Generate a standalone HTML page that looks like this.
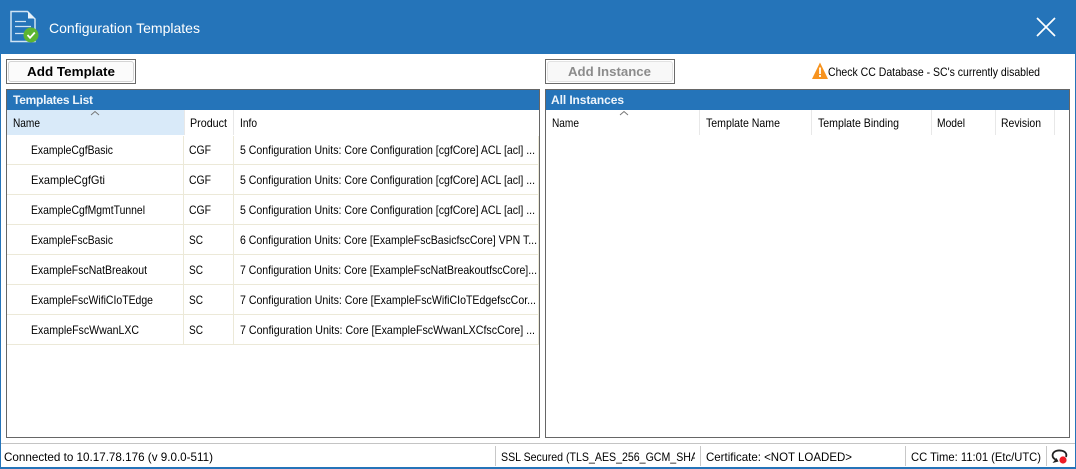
<!DOCTYPE html>
<html><head><meta charset="utf-8"><title>Configuration Templates</title>
<style>
html,body{margin:0;padding:0;background:#fff;width:1076px;height:469px;overflow:hidden}
svg{display:block}
text{font-family:"Liberation Sans",sans-serif;font-size:12px;fill:#000}
.b{font-weight:bold}
.big{font-size:13px}
</style></head><body>
<svg width="1076" height="469" viewBox="0 0 1076 469" xmlns="http://www.w3.org/2000/svg">
<defs><clipPath id="ssl"><rect x="497" y="445" width="198" height="22"/></clipPath></defs>
<rect width="1076" height="469" fill="#fff"/>
<!-- window frame -->
<rect x="0" y="0" width="1076" height="54" fill="#2574b9"/>
<rect x="0" y="0" width="1" height="469" fill="#2574b9"/>
<rect x="1075" y="0" width="1" height="469" fill="#2574b9"/>
<rect x="0" y="467" width="1076" height="2" fill="#2574b9"/>
<!-- title icon -->
<path d="M11 11.500H27.500L35 19V41.500H11Z" fill="#2574b9" stroke="#cfe3f4" stroke-width="1.500"/>
<path d="M28 11.500V18.500H35Z" fill="#e8f2fa"/>
<path d="M15 21.500H26M15 26.500H31M15 33.500H24" stroke="#cfe3f4" stroke-width="1.300" fill="none"/>
<circle cx="31" cy="35" r="7.500" fill="#5cb531"/>
<path d="M27.500 35L30 37.800L34.800 32.500" stroke="#fff" stroke-width="1.800" fill="none"/>
<text x="49" y="33" style="font-size:14px;fill:#fff" textLength="151" lengthAdjust="spacingAndGlyphs">Configuration Templates</text>
<!-- close -->
<path d="M1037 18L1055 36M1055 18L1037 36" stroke="#fff" stroke-width="1.700" fill="none"/>
<!-- buttons -->
<rect x="6.500" y="59.500" width="129" height="24" fill="#fff" stroke="#6a6a6a"/>
<rect x="8.500" y="61.500" width="125" height="20" rx="2.500" fill="#fbfbfb" stroke="#d4d4d4"/>
<text x="27" y="76" class="b big" textLength="88" lengthAdjust="spacingAndGlyphs">Add Template</text>
<rect x="545.500" y="59.500" width="129" height="24" fill="#fff" stroke="#6a6a6a"/>
<rect x="547.500" y="61.500" width="125" height="20" rx="2.500" fill="#f8f8f8" stroke="#e2e2e2"/>
<text x="568" y="76" class="b big" style="fill:#8c8c8c" textLength="83" lengthAdjust="spacingAndGlyphs">Add Instance</text>
<!-- warning -->
<path d="M820 62.500L828 79H812Z" fill="#f7931e"/>
<rect x="819.100" y="67.500" width="1.800" height="6.500" fill="#fff"/>
<rect x="819.100" y="75" width="1.800" height="2" fill="#fff"/>
<text x="828" y="76" textLength="212" lengthAdjust="spacingAndGlyphs">Check CC Database - SC's currently disabled</text>
<!-- left panel -->
<rect x="6.500" y="89.500" width="533" height="348" fill="#fff" stroke="#666"/>
<rect x="7" y="90" width="532" height="20" fill="#2574b9"/>
<text x="13" y="104" class="b" style="fill:#eef5fb" textLength="80">Templates List</text>
<rect x="7" y="110" width="177" height="25" fill="#d9eaf9"/>
<path d="M91 115L95 111.500L99 115" fill="none" stroke="#777" stroke-width="1"/>
<rect x="184" y="110" width="1" height="25" fill="#e8e8e8"/>
<rect x="233" y="110" width="1" height="25" fill="#e8e8e8"/>
<text x="13" y="127" textLength="27" lengthAdjust="spacingAndGlyphs">Name</text>
<text x="190" y="127" textLength="37" lengthAdjust="spacingAndGlyphs">Product</text>
<text x="240" y="127" textLength="17" lengthAdjust="spacingAndGlyphs">Info</text>
<!-- row grid -->
<g fill="#ece9d8">
<rect x="7" y="164" width="532" height="1"/>
<rect x="7" y="194" width="532" height="1"/>
<rect x="7" y="224" width="532" height="1"/>
<rect x="7" y="254" width="532" height="1"/>
<rect x="7" y="284" width="532" height="1"/>
<rect x="7" y="314" width="532" height="1"/>
<rect x="7" y="344" width="532" height="1"/>
<rect x="183" y="136" width="1" height="208"/>
<rect x="233" y="136" width="1" height="208"/>
<rect x="538" y="136" width="1" height="208"/>
</g>
<text x="31" y="154" textLength="82" lengthAdjust="spacingAndGlyphs">ExampleCgfBasic</text>
<text x="189" y="154" textLength="22" lengthAdjust="spacingAndGlyphs">CGF</text>
<text x="240" y="154" textLength="295" lengthAdjust="spacingAndGlyphs">5 Configuration Units: Core Configuration [cgfCore] ACL [acl] ...</text>
<text x="31" y="184" textLength="74" lengthAdjust="spacingAndGlyphs">ExampleCgfGti</text>
<text x="189" y="184" textLength="22" lengthAdjust="spacingAndGlyphs">CGF</text>
<text x="240" y="184" textLength="295" lengthAdjust="spacingAndGlyphs">5 Configuration Units: Core Configuration [cgfCore] ACL [acl] ...</text>
<text x="31" y="214" textLength="114" lengthAdjust="spacingAndGlyphs">ExampleCgfMgmtTunnel</text>
<text x="189" y="214" textLength="22" lengthAdjust="spacingAndGlyphs">CGF</text>
<text x="240" y="214" textLength="295" lengthAdjust="spacingAndGlyphs">5 Configuration Units: Core Configuration [cgfCore] ACL [acl] ...</text>
<text x="31" y="244" textLength="82" lengthAdjust="spacingAndGlyphs">ExampleFscBasic</text>
<text x="189" y="244" textLength="14" lengthAdjust="spacingAndGlyphs">SC</text>
<text x="240" y="244" textLength="297" lengthAdjust="spacingAndGlyphs">6 Configuration Units: Core [ExampleFscBasicfscCore] VPN T...</text>
<text x="31" y="274" textLength="116" lengthAdjust="spacingAndGlyphs">ExampleFscNatBreakout</text>
<text x="189" y="274" textLength="14" lengthAdjust="spacingAndGlyphs">SC</text>
<text x="240" y="274" textLength="297" lengthAdjust="spacingAndGlyphs">7 Configuration Units: Core [ExampleFscNatBreakoutfscCore]...</text>
<text x="31" y="304" textLength="122" lengthAdjust="spacingAndGlyphs">ExampleFscWifiCIoTEdge</text>
<text x="189" y="304" textLength="14" lengthAdjust="spacingAndGlyphs">SC</text>
<text x="240" y="304" textLength="296" lengthAdjust="spacingAndGlyphs">7 Configuration Units: Core [ExampleFscWifiCIoTEdgefscCor...</text>
<text x="31" y="334" textLength="108" lengthAdjust="spacingAndGlyphs">ExampleFscWwanLXC</text>
<text x="189" y="334" textLength="14" lengthAdjust="spacingAndGlyphs">SC</text>
<text x="240" y="334" textLength="295" lengthAdjust="spacingAndGlyphs">7 Configuration Units: Core [ExampleFscWwanLXCfscCore] ...</text>
<!-- right panel -->
<rect x="545.500" y="89.500" width="524" height="348" fill="#fff" stroke="#666"/>
<rect x="546" y="90" width="523" height="20" fill="#2574b9"/>
<text x="551" y="104" class="b" style="fill:#eef5fb" textLength="73">All Instances</text>
<path d="M620 115L624 111.500L628 115" fill="none" stroke="#777" stroke-width="1"/>
<g fill="#e8e8e8">
<rect x="699" y="110" width="1" height="25"/>
<rect x="811" y="110" width="1" height="25"/>
<rect x="931" y="110" width="1" height="25"/>
<rect x="995" y="110" width="1" height="25"/>
<rect x="1054" y="110" width="1" height="25"/>
</g>
<text x="552" y="127" textLength="27" lengthAdjust="spacingAndGlyphs">Name</text>
<text x="706" y="127" textLength="74" lengthAdjust="spacingAndGlyphs">Template Name</text>
<text x="818" y="127" textLength="81" lengthAdjust="spacingAndGlyphs">Template Binding</text>
<text x="937" y="127" textLength="28" lengthAdjust="spacingAndGlyphs">Model</text>
<text x="1001" y="127" textLength="40" lengthAdjust="spacingAndGlyphs">Revision</text>
<!-- status bar -->
<rect x="1" y="443" width="1074" height="1" fill="#c4c4c4"/>
<g fill="#c8c8c8">
<rect x="495" y="446" width="1" height="20"/>
<rect x="700" y="446" width="1" height="20"/>
<rect x="905" y="446" width="1" height="20"/>
<rect x="1046" y="446" width="1" height="20"/>
</g>
<text x="4" y="461" textLength="209" lengthAdjust="spacingAndGlyphs">Connected to 10.17.78.176 (v 9.0.0-511)</text>
<g clip-path="url(#ssl)"><text x="501" y="461" textLength="197" lengthAdjust="spacingAndGlyphs">SSL Secured (TLS_AES_256_GCM_SHA</text></g>
<text x="706" y="461" textLength="146" lengthAdjust="spacingAndGlyphs">Certificate: &lt;NOT LOADED&gt;</text>
<text x="911" y="461" textLength="130" lengthAdjust="spacingAndGlyphs">CC Time: 11:01 (Etc/UTC)</text>
<path d="M1055.500 459.500C1052.500 458 1052 455.500 1053 453.500C1054.500 450.500 1058.500 450 1062 450.800C1066 451.800 1067 454.500 1066 457" fill="none" stroke="#222" stroke-width="1.800"/>
<path d="M1052.500 463L1056.500 458L1058.500 461.500Z" fill="#222"/>
<circle cx="1063" cy="460" r="3.600" fill="#ee1c25"/>
</svg>
</body></html>
